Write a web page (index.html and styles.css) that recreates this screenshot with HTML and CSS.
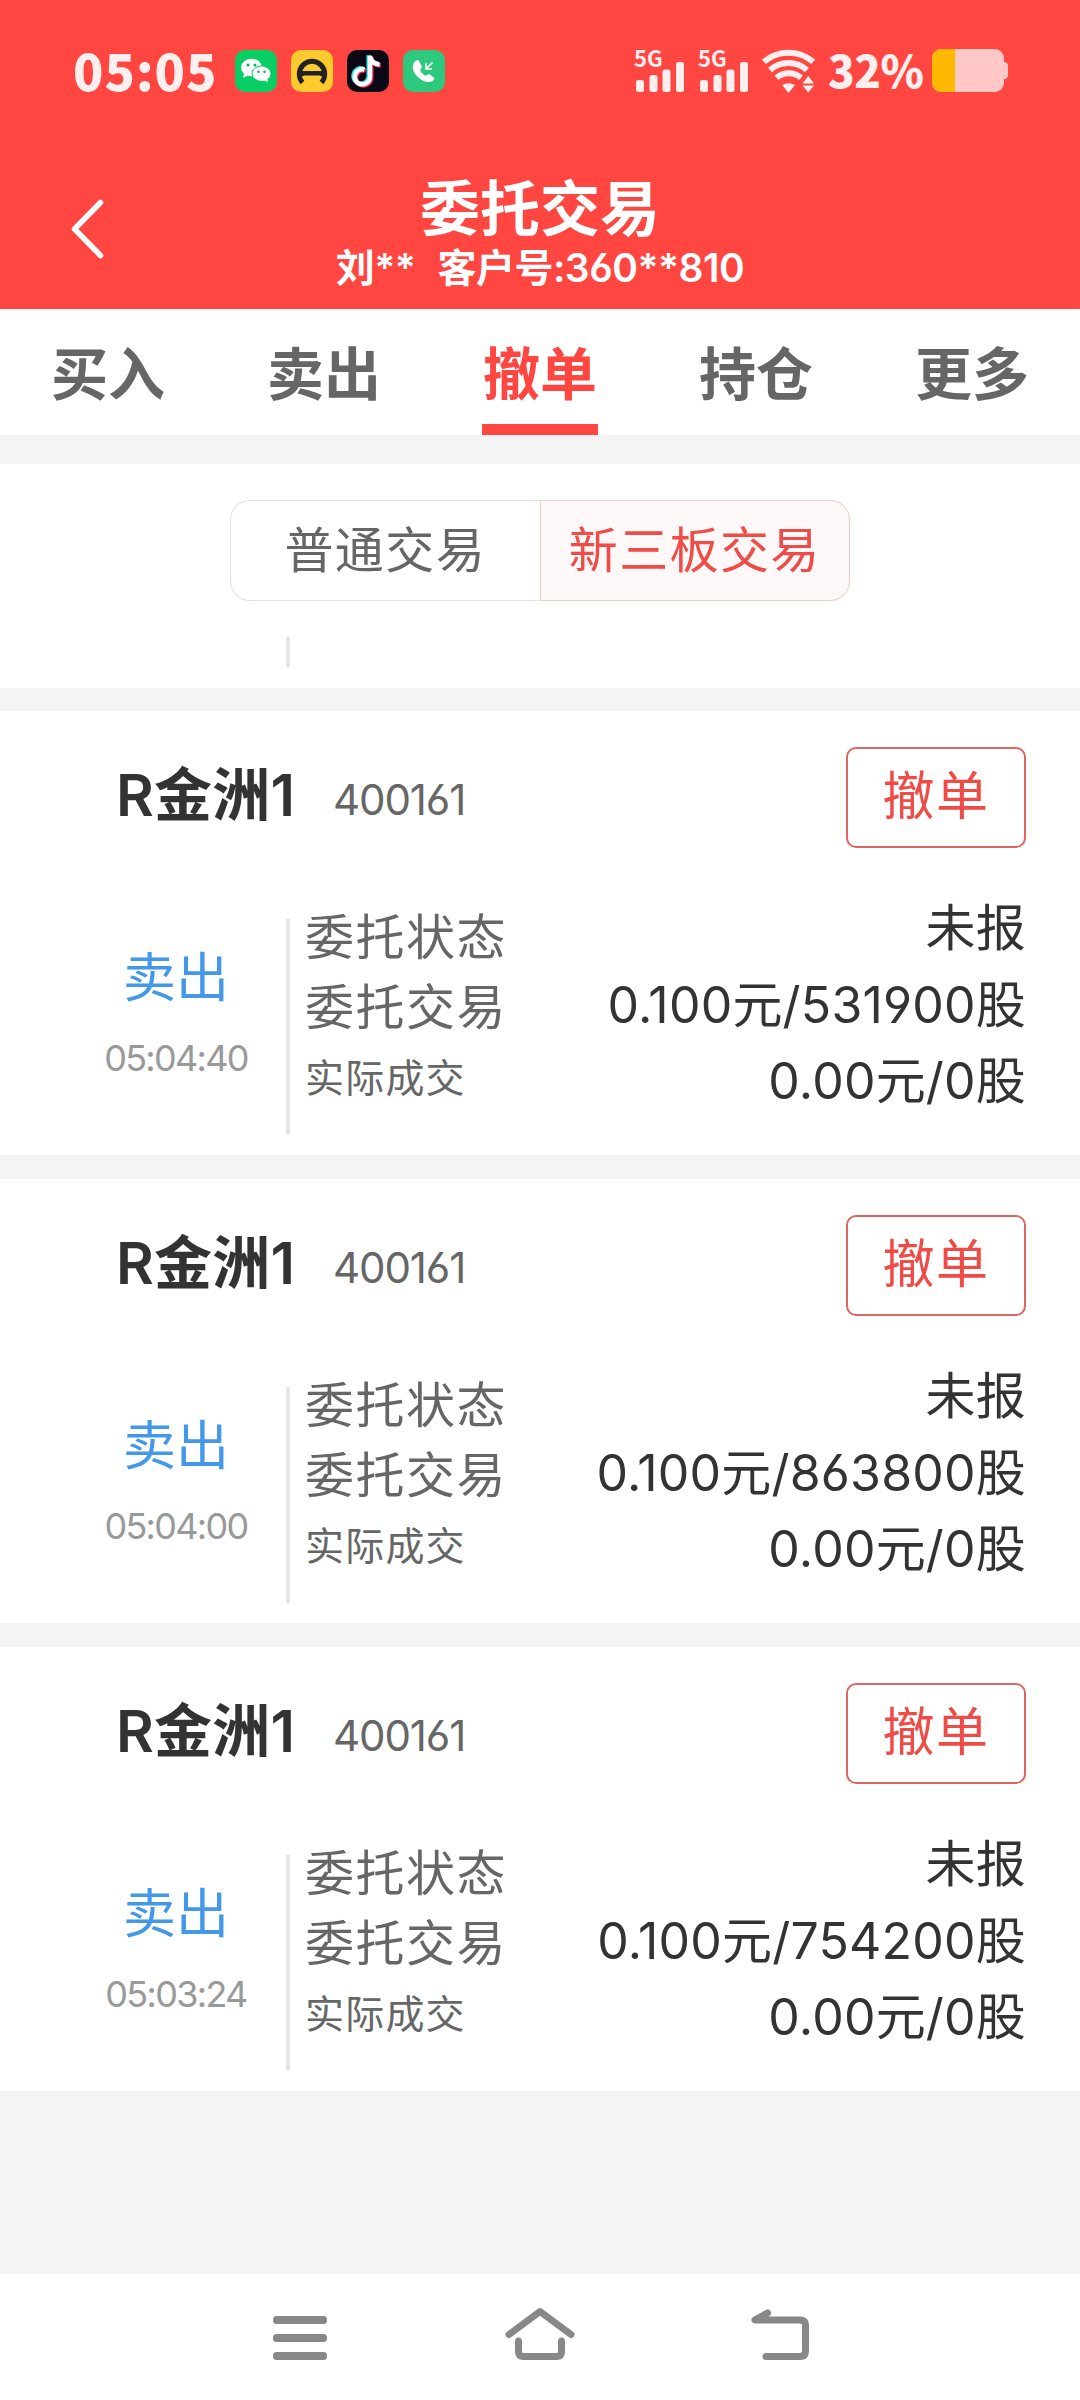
FILE: index.html
```html
<!DOCTYPE html>
<html lang="zh-CN">
<head>
<meta charset="utf-8">
<title>委托交易</title>
<link rel="stylesheet" href="styles.css">
</head>
<body>
<header class="header">
  <div class="status">
    <span class="clock">05:05</span>
    <div class="apps">
      <svg class="app" viewBox="0 0 42 42"><rect width="42" height="42" rx="10" fill="#07cf63"/><ellipse cx="16.500" cy="17.500" rx="10.500" ry="8.800" fill="#fff"/><path d="M9 23l-.8 5 5-2.500z" fill="#fff"/><ellipse cx="26.500" cy="23.700" rx="10" ry="8.200" fill="#07cf63"/><ellipse cx="26.500" cy="23.700" rx="9" ry="7.300" fill="#fff"/><path d="M28 30l5 2-.8-5z" fill="#fff"/><g fill="#07b457"><circle cx="13" cy="15" r="1.500"/><circle cx="20" cy="15" r="1.500"/><circle cx="23.500" cy="21.800" r="1.200"/><circle cx="29.500" cy="21.800" r="1.200"/></g></svg>
      <svg class="app" viewBox="0 0 42 42"><rect width="42" height="42" rx="10" fill="#fecb2f"/><path d="M11.500 32.500A12.700 12.700 0 1 1 30.500 32.500" fill="none" stroke="#222" stroke-width="5"/><path d="M8 21h26v5c-3 0-5 0-6-.5h-14c-1 .5-3 .5-6 .5z" fill="#222"/></svg>
      <svg class="app" viewBox="0 0 42 42"><rect width="42" height="42" rx="10" fill="#0b0916"/><g fill="none" stroke-width="4.500"><path d="M17.500 19.500a7.600 7.600 0 1 0 5.500 7.500V6c.5 5 4 8 9.500 8.500" stroke="#25e6e2" transform="translate(-1.300 -.8)"/><path d="M17.500 19.500a7.600 7.600 0 1 0 5.500 7.500V6c.5 5 4 8 9.500 8.500" stroke="#fb2c54" transform="translate(1.200 1)"/><path d="M17.500 19.500a7.600 7.600 0 1 0 5.500 7.500V6c.5 5 4 8 9.500 8.500" stroke="#fff"/></g></svg>
      <svg class="app" viewBox="0 0 42 42"><rect width="42" height="42" rx="10" fill="#2dca7d"/><path d="M13 10.500c-4 3-4.500 9 0 14.500s11 8.500 16.500 6c1.500-1 2.200-2 1.500-3l-4-3.500c-1.200-.8-2.500-.2-4 1.300-3-1-5-3-6-6 1.500-1.500 2-2.500 1.500-4l-2.500-5c-.7-1.200-2-1-3-.3z" fill="#fff"/><path d="M29.500 12.500l-6 6M23 13v6h6" fill="none" stroke="#fff" stroke-width="1.700"/></svg>
    </div>
    <div class="indicators">
      <div class="cell"><span class="net">5G</span><svg class="bars" viewBox="0 0 50 31"><rect x="0" y="18" width="8" height="12" rx="2.500"/><rect x="13.500" y="13" width="8" height="17" rx="2.500"/><rect x="26.500" y="7.500" width="8" height="22.500" rx="2.500"/><rect x="40" y="0" width="8" height="30" rx="2.500"/></svg></div>
      <div class="cell"><span class="net">5G</span><svg class="bars" viewBox="0 0 50 31"><rect x="0" y="18" width="8" height="12" rx="2.500"/><rect x="13.500" y="13" width="8" height="17" rx="2.500"/><rect x="26.500" y="7.500" width="8" height="22.500" rx="2.500"/><rect x="40" y="0" width="8" height="30" rx="2.500"/></svg></div>
      <svg class="wifi" viewBox="0 0 54 44"><g fill="none" stroke="#ffefef" stroke-width="6"><path d="M1.800 12.800a38 38 0 0 1 49.400 0"/><path d="M8 21a28 28 0 0 1 37 0"/><path d="M14.500 28.800a19 19 0 0 1 24.500 0"/></g><path d="M20 36q6.500-3.500 13 0l-6.500 8zM40.500 34.500h11.500l-5.700-7.500zM40.500 36.500h11.500l-5.700 7z" fill="#ffefef"/></svg>
      <span class="percent">32%</span>
      <svg class="battery" viewBox="0 0 76 43"><path d="M70 13h3q3 1 3 4v9q0 3-3 4h-3z" fill="#ffc7c5"/><rect width="72" height="43" rx="9" fill="#ffc7c5"/><path d="M9 0h14v43H9a9 9 0 0 1-9-9V9a9 9 0 0 1 9-9z" fill="#ffb900"/></svg>
    </div>
  </div>
  <div class="titlebar">
    <svg class="back" viewBox="0 0 34 60"><path d="M30.500 3.500L4.500 30l26 26.500" fill="none" stroke="#fff" stroke-width="5.500" stroke-linecap="round" stroke-linejoin="round"/></svg>
    <div class="heading">
      <h1 class="title">委托交易</h1>
      <p class="account"><span>刘**</span><span>客户号:360**810</span></p>
    </div>
  </div>
</header>
<nav class="tabs">
  <a class="tab">买入</a>
  <a class="tab">卖出</a>
  <a class="tab active"><span class="tab-label">撤单</span></a>
  <a class="tab">持仓</a>
  <a class="tab">更多</a>
</nav>
<section class="filter">
  <div class="segment">
    <span class="option">普通交易</span>
    <span class="option selected">新三板交易</span>
  </div>
  <div class="stub"></div>
</section>
<main class="orders">
  <article class="order">
    <div class="order-head"><h2 class="name">R金洲1</h2><span class="code">400161</span><button class="cancel">撤单</button></div>
    <div class="order-body">
      <div class="side"><span class="action">卖出</span><time class="time">05:04:40</time></div>
      <div class="labels"><span>委托状态</span><span>委托交易</span><span class="small">实际成交</span></div>
      <div class="values"><span>未报</span><span>0.100元/531900股</span><span>0.00元/0股</span></div>
    </div>
  </article>
  <article class="order">
    <div class="order-head"><h2 class="name">R金洲1</h2><span class="code">400161</span><button class="cancel">撤单</button></div>
    <div class="order-body">
      <div class="side"><span class="action">卖出</span><time class="time">05:04:00</time></div>
      <div class="labels"><span>委托状态</span><span>委托交易</span><span class="small">实际成交</span></div>
      <div class="values"><span>未报</span><span>0.100元/863800股</span><span>0.00元/0股</span></div>
    </div>
  </article>
  <article class="order">
    <div class="order-head"><h2 class="name">R金洲1</h2><span class="code">400161</span><button class="cancel">撤单</button></div>
    <div class="order-body">
      <div class="side"><span class="action">卖出</span><time class="time">05:03:24</time></div>
      <div class="labels"><span>委托状态</span><span>委托交易</span><span class="small">实际成交</span></div>
      <div class="values"><span>未报</span><span>0.100元/754200股</span><span>0.00元/0股</span></div>
    </div>
  </article>
</main>
<footer class="navbar">
  <svg class="nav-icon" viewBox="0 0 80 60"><g fill="#888"><rect x="13" y="11" width="54" height="8" rx="3.500"/><rect x="13" y="29" width="54" height="8" rx="3.500"/><rect x="13" y="47" width="54" height="8" rx="3.500"/></g></svg>
  <svg class="nav-icon" viewBox="0 0 80 60"><g fill="none" stroke="#888" stroke-width="7" stroke-linecap="round" stroke-linejoin="round"><path d="M9 29.500L40 6.500l31 23"/><path d="M18.500 36v10.500q0 5 5 5h33q5 0 5-5V36"/></g></svg>
  <svg class="nav-icon" viewBox="0 0 80 60"><g fill="none" stroke="#888" stroke-width="7" stroke-linecap="round" stroke-linejoin="round"><path d="M27.500 8L15 15h45q5.500 0 5.500 5v26q0 5.500-5.500 5.500H26"/></g></svg>
</footer>
</body>
</html>
```
FILE: styles.css
```css
* { box-sizing: border-box; margin: 0; padding: 0; }

body {
  width: 1080px;
  height: 2400px;
  display: flex;
  flex-direction: column;
  background: #f4f4f4;
  color: #666;
  font-family: Inter, "Noto Sans CJK SC", sans-serif;
  font-feature-settings: "cv03", "cv04";
  white-space: nowrap;
}

svg { display: block; flex: none; }

.header { height: 309px; background: #ff4641; color: #fff; }

.status {
  height: 142px;
  display: flex;
  align-items: center;
  padding: 0 72px 0 73px;
  color: #ffefef;
  font-family: "Noto Sans CJK SC", sans-serif;
  font-weight: 700;
}
.clock { width: 162px; padding-bottom: 5px; font-size: 50px; font-weight: 900; letter-spacing: 1px; line-height: 60px; }
.apps { display: flex; gap: 14px; }
.app { width: 42px; height: 42px; }
.indicators { flex: 1; display: flex; align-items: center; justify-content: flex-end; }
.cell { width: 64px; height: 44px; display: flex; flex-direction: column; }
.net { height: 13px; font-size: 22px; line-height: 17px; }
.bars { width: 50px; height: 31px; margin-left: 2px; fill: #ffefef; }
.wifi { width: 54px; height: 44px; }
.percent { width: 104px; margin-left: 12px; padding-bottom: 4px; font-size: 44px; font-weight: 900; line-height: 60px; letter-spacing: -.5px; }
.battery { width: 76px; height: 43px; margin-bottom: 1px; }

.titlebar { display: grid; grid-template-columns: 150px 780px 150px; }
.back { width: 34px; height: 60px; margin: 57px 0 0 70px; }
.heading { text-align: center; padding-top: 32px; }
.title { font-size: 60px; line-height: 70px; font-weight: 700; }
.account { display: flex; justify-content: center; gap: 22px; font-size: 39px; line-height: 48px; font-weight: 600; letter-spacing: -.5px; }

.tabs { height: 126px; display: grid; grid-template-columns: repeat(5, 1fr); background: #fff; }
.tab { display: flex; justify-content: center; font-size: 57px; line-height: 131px; font-weight: 700; }
.active { color: #ff4641; }
.tab-label { width: 116px; border-bottom: 11px solid #ff4641; height: 126px; text-align: center; }

.filter { height: 224px; margin-top: 29px; padding: 36px 230px 0; background: #fff; }
.segment { height: 101px; display: flex; }
.option {
  flex: 1;
  display: flex;
  align-items: center;
  justify-content: center;
  padding-bottom: 8px;
  border: 1.500px solid #e2e2e2;
  border-right: 0;
  border-radius: 20px 0 0 20px;
  font-size: 49px;
  letter-spacing: 1.400px;
}
.selected { color: #ef4b47; background: #fff8f8; border: 1.500px solid #f0c8c8; border-radius: 0 20px 20px 0; }
.stub { width: 4px; height: 30px; margin: 36px 0 0 56px; background: #e6e6e6; }

.orders { margin-top: 23px; display: flex; flex-direction: column; gap: 24px; }
.order { height: 444px; padding-top: 36px; background: #fff; }
.order-head { height: 101px; display: flex; padding: 0 54px 0 116px; }
.name { width: 217px; font-size: 58px; line-height: 96px; font-weight: 600; color: #333; letter-spacing: .2px; }
.code { flex: 1; font-size: 42px; line-height: 106px; letter-spacing: -1.100px; }
.cancel {
  width: 180px;
  height: 101px;
  padding-bottom: 10px;
  border: 2px solid #df6560;
  border-radius: 10px;
  background: #fff;
  color: #ef4b47;
  font-family: inherit;
  font-size: 52px;
  letter-spacing: 1.500px;
}
.order-body { display: flex; padding: 42px 54px 0 0; }
.side { width: 290px; height: 216px; margin-top: 29px; padding: 29px 0 0 66px; border-right: 4px solid #e6e6e6; display: flex; flex-direction: column; align-items: center; }
.action { font-size: 53px; line-height: 60px; color: #4398e8; }
.time { margin-top: 25px; font-size: 36px; line-height: 50px; color: #999; letter-spacing: -1.700px; }
.labels { display: flex; flex-direction: column; margin: 13px 0 0 15px; font-size: 49px; line-height: 70px; letter-spacing: 1.500px; }
.small { font-size: 39px; letter-spacing: 1.200px; }
.values { flex: 1; display: flex; flex-direction: column; align-items: flex-end; font-size: 50px; line-height: 76.500px; color: #333; letter-spacing: .2px; }

.navbar { height: 126px; margin-top: auto; padding: 0 180px 4px; display: grid; grid-template-columns: repeat(3, 1fr); justify-items: center; align-content: center; background: #fff; }
.nav-icon { width: 80px; height: 60px; }
```
